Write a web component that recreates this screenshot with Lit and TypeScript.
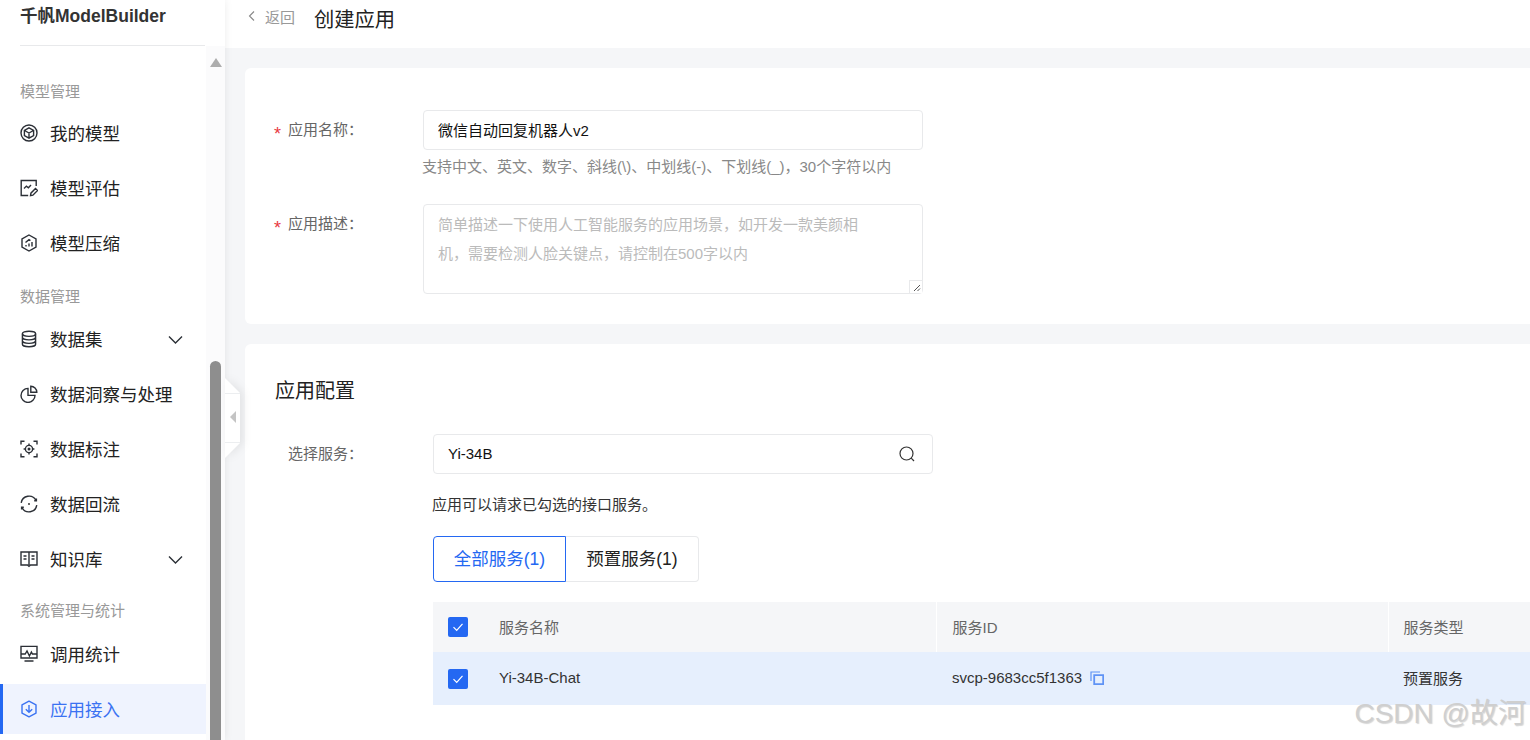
import { LitElement, html, css, svg } from "lit";
import { customElement } from "lit/decorators.js";

const icons: Record<string, any> = {
  cube: svg`<circle cx="9" cy="9" r="8"/><path d="M9 3.8l4.6 2.6v5.2L9 14.2l-4.6-2.6V6.4zM4.6 6.5L9 9l4.4-2.5M9 9v5"/>`,
  evaluate: svg`<path d="M16.2 7V1.5H1.2v15h7"/><path d="M4 9.5l2.4-2.4 2 1.6L11 6"/><path d="M10.5 16.6l.4-2.4 4.6-4.6 2 2-4.6 4.6z"/>`,
  compress: svg`<path d="M9 1l7 4v8l-7 4-7-4V5z"/><path d="M6 12.5v-1.5M9 12.5V9.5M12 12.5V8M5.5 8.5L9 5.6l1.4 1"/>`,
  database: svg`<ellipse cx="9" cy="3.8" rx="6.6" ry="2.6"/><path d="M2.4 3.8v10.4c0 1.4 3 2.6 6.6 2.6s6.6-1.2 6.6-2.6V3.8M2.4 7.3c0 1.4 3 2.6 6.6 2.6s6.6-1.2 6.6-2.6M2.4 10.8c0 1.4 3 2.6 6.6 2.6s6.6-1.2 6.6-2.6"/>`,
  pie: svg`<path d="M8 3.4a7 7 0 1 0 7 7H8z"/><path d="M10.8 1.2a6 6 0 0 1 6 6h-6z"/>`,
  label: svg`<path d="M1 4.5V1.2h3.5M13.5 1.2H17v3.3M17 13.5v3.3h-3.5M4.5 16.8H1v-3.3"/><circle cx="9" cy="9" r="3.6"/><circle cx="9" cy="9" r=".8" fill="currentColor"/><path d="M9 3.6v1.8M9 12.6v1.8M3.6 9h1.8M12.6 9h1.8"/>`,
  reflow: svg`<path d="M1.2 7.8A7.9 7.9 0 0 1 16 5.4M16.8 10.2A7.9 7.9 0 0 1 2 12.6"/><path d="M16.4 3.4v2.4h-2.2M1.6 14.6v-2.4h2.2"/><circle cx="9" cy="9" r=".9" fill="currentColor" stroke="none"/>`,
  book: svg`<path d="M1 2h16v13H10.5l-1.5 1.4L7.5 15H1zM9 2v13"/><path d="M3.5 6h3M3.5 9h3M11.5 6h3M11.5 9h3"/>`,
  monitor: svg`<path d="M1 1.4h16v11.6H1zM1 9h4.2l1.8-3 2.4 5 2-4 1 2H17M4.5 16h9"/>`,
  access: svg`<path d="M9 1.2l7 3.6v8.4l-7 3.6-7-3.6V4.8z" stroke-linejoin="round"/><path d="M9 5v7M5.8 9.2L9 12.3l3.2-3.1"/>`,
};

const menu: Array<{ group: string; short?: boolean; items: Array<{ icon: string; label: string; more?: boolean; active?: boolean }> }> = [
  {
    group: "模型管理",
    items: [
      { icon: "cube", label: "我的模型" },
      { icon: "evaluate", label: "模型评估" },
      { icon: "compress", label: "模型压缩" },
    ],
  },
  {
    group: "数据管理",
    items: [
      { icon: "database", label: "数据集", more: true },
      { icon: "pie", label: "数据洞察与处理" },
      { icon: "label", label: "数据标注" },
      { icon: "reflow", label: "数据回流" },
      { icon: "book", label: "知识库", more: true },
    ],
  },
  {
    group: "系统管理与统计",
    short: true,
    items: [
      { icon: "monitor", label: "调用统计" },
      { icon: "access", label: "应用接入", active: true },
    ],
  },
];

@customElement("app-root")
export class AppRoot extends LitElement {
  static styles = css`
    :host {
      display: flex;
      width: 1530px;
      height: 740px;
      overflow: hidden;
      position: relative;
      background: #f5f6f8;
      color: #222;
      font-family: "Liberation Sans", "Noto Sans CJK SC", sans-serif;
      font-size: 15px;
    }
    .sidebar {
      position: relative;
      z-index: 2;
      flex: none;
      width: 225px;
      display: flex;
      flex-direction: column;
      background: #fff;
      box-shadow: 0 0 8px rgba(0, 0, 0, 0.08);
    }
    .brand {
      flex: none;
      height: 45px;
      margin: 0 20px;
      width: 185px;
      border-bottom: 1px solid #e8e9eb;
      font-size: 17.5px;
      font-weight: 700;
      color: #333;
      line-height: 32px;
      white-space: nowrap;
    }
    .side-body {
      flex: 1;
      min-height: 0;
      display: flex;
    }
    nav {
      flex: none;
      width: 206px;
      padding-top: 21px;
      overflow: hidden;
    }
    .group {
      height: 41px;
      padding: 10px 0 0 20px;
      box-sizing: border-box;
      color: #999;
      line-height: 27px;
    }
    .group:first-child {
      padding-top: 11px;
    }
    .group.short {
      height: 40px;
      padding-top: 8px;
    }
    .item {
      height: 50px;
      margin-bottom: 5px;
      padding-left: 20px;
      display: flex;
      align-items: center;
      gap: 12px;
      font-size: 17.5px;
      color: #222;
      box-sizing: border-box;
    }
    .item span {
      margin-bottom: 2px;
    }
    .item.active {
      background: #eff3fe;
      color: #3a72f2;
      border-left: 3px solid #2468f2;
      padding-left: 17px;
    }
    .item svg {
      width: 18px;
      height: 18px;
      flex: none;
      fill: none;
      stroke: #2b2f36;
      stroke-width: 1.4;
    }
    .item.active svg {
      stroke: #3a72f2;
    }
    .item .chev {
      width: 15px;
      height: 15px;
      margin-left: auto;
      margin-right: 23px;
    }
    .track {
      flex: 1;
      background: #fbfbfc;
      display: flex;
      flex-direction: column;
      align-items: center;
      padding: 12px 0 0 0;
    }
    .track-up {
      width: 0;
      height: 0;
      border-left: 6.5px solid transparent;
      border-right: 6.5px solid transparent;
      border-bottom: 9px solid #adadad;
    }
    .thumb {
      width: 11px;
      flex: 1;
      margin-top: 294px;
      border-radius: 6px 6px 0 0;
      background: #8e8e8e;
    }
    .handle {
      position: absolute;
      left: 225px;
      top: 378px;
      width: 15px;
      height: 80px;
      filter: drop-shadow(3px 0 4px rgba(0, 0, 0, 0.08));
    }
    .handle-shape {
      width: 100%;
      height: 100%;
      background: linear-gradient(#fff 0 15px, #eceef0 15px 16px, #fff 16px 64px, #eceef0 64px 65px, #fff 65px);
      clip-path: polygon(0 0, 100% 15px, 100% 65px, 0 100%);
      display: flex;
      align-items: center;
      justify-content: center;
    }
    .handle-arrow {
      width: 0;
      height: 0;
      margin-top: -3px;
      border-top: 6px solid transparent;
      border-bottom: 6px solid transparent;
      border-right: 6px solid #c4c4c4;
    }
    main {
      flex: 1;
      min-width: 0;
      display: flex;
      flex-direction: column;
    }
    .topbar {
      flex: none;
      height: 48px;
      box-sizing: border-box;
      background: #fff;
      padding: 0 0 13px 23px;
      display: flex;
      align-items: center;
    }
    .back {
      display: flex;
      align-items: center;
      gap: 9px;
      color: #999;
      margin: 0 19px 3px 0;
    }
    .back svg {
      width: 8px;
      height: 10px;
      fill: none;
      stroke: #888;
      stroke-width: 1.1;
    }
    .page-title {
      font-size: 20.3px;
      color: #222;
    }
    .content {
      flex: 1;
      min-height: 0;
      padding: 20px 0 0 20px;
      display: flex;
      flex-direction: column;
      gap: 20px;
    }
    .card {
      background: #fff;
      border-radius: 6px 0 0 6px;
      padding: 0 0 0 30px;
    }
    .card.basic {
      flex: none;
      height: 256px;
      padding-top: 42px;
      box-sizing: border-box;
    }
    .card.config {
      flex: 1;
      min-height: 0;
      padding-top: 33px;
      border-radius: 6px 0 0 0;
    }
    .row {
      display: grid;
      grid-template-columns: 148px 500px;
    }
    .config .row {
      grid-template-columns: 158px 500px;
    }
    .row + .row {
      margin-top: 28px;
    }
    .label {
      color: #666;
      line-height: 40px;
      height: 40px;
      padding-left: 13px;
      position: relative;
    }
    .label.required::before {
      content: "*";
      position: absolute;
      left: -1px;
      top: 4px;
      font-size: 18px;
      color: #e8393f;
    }
    .field {
      width: 500px;
      height: 40px;
      box-sizing: border-box;
      border: 1px solid #e8e9eb;
      border-radius: 4px;
      padding: 0 14px;
      display: flex;
      align-items: center;
      justify-content: space-between;
      background: #fff;
    }
    input,
    textarea {
      border: 0;
      outline: 0;
      padding: 0;
      margin: 0;
      width: 100%;
      background: none;
      font: inherit;
      color: #111;
    }
    input {
      position: relative;
      top: -1px;
    }
    .hint {
      margin-top: 8px;
      color: #888;
      line-height: 18px;
      margin-left: -1px;
      white-space: nowrap;
    }
    .area {
      position: relative;
      height: 90px;
      padding: 5px 14px;
      align-items: flex-start;
    }
    textarea {
      height: 76px;
      resize: none;
      padding-right: 44px;
      line-height: 29px;
      box-sizing: border-box;
      overflow: hidden;
    }
    textarea::placeholder {
      color: #bbb;
      opacity: 1;
    }
    .grip {
      position: absolute;
      right: 0;
      bottom: 0;
      width: 13px;
      height: 13px;
      box-sizing: border-box;
      border: 1px solid #e8e9eb;
      border-width: 1px 0 0 1px;
      background: #fff;
    }
    .grip svg {
      display: block;
      width: 12px;
      height: 12px;
      stroke: #555;
      stroke-width: 1;
      fill: none;
    }
    .section-title {
      font-size: 20px;
      line-height: 28px;
      color: #222;
      margin-bottom: 29px;
    }
    .search svg {
      width: 18px;
      height: 18px;
      fill: none;
      stroke: #333;
      stroke-width: 1.2;
      margin-right: 2px;
      flex: none;
    }
    .service {
      margin-left: 158px;
    }
    .note {
      margin-top: 21px;
      line-height: 20px;
      margin-left: -1px;
      color: #333;
    }
    .tabs {
      display: flex;
      margin-top: 21px;
    }
    .tab {
      width: 133px;
      height: 46px;
      box-sizing: border-box;
      padding-bottom: 4px;
      display: flex;
      align-items: center;
      justify-content: center;
      font-size: 17.5px;
      border: 1px solid #e8e9eb;
      border-left: 0;
      border-radius: 0 4px 4px 0;
      color: #222;
    }
    .tab.on {
      color: #2468f2;
      border: 1px solid #2468f2;
      border-radius: 4px 0 0 4px;
    }
    table {
      margin-top: 20px;
      width: 1097px;
      border-collapse: collapse;
      table-layout: fixed;
    }
    th,
    td {
      padding: 0 0 2px 15px;
      box-sizing: border-box;
      text-align: left;
      font-weight: 400;
      white-space: nowrap;
    }
    th {
      height: 50px;
      background: #f5f6f8;
      color: #666;
    }
    th:nth-child(n + 3) {
      border-left: 1px solid #fff;
    }
    td {
      height: 53px;
      background: #e6effd;
      color: #333;
    }
    th:nth-child(3),
    td:nth-child(3) {
      padding-left: 16px;
    }
    .col-check {
      width: 51px;
    }
    .col-name {
      width: 452px;
    }
    .col-id {
      width: 452px;
    }
    .check {
      width: 20px;
      height: 20px;
      margin-bottom: -2px;
      border-radius: 2px;
      background: #2468f2;
      display: block;
    }
    .check svg {
      display: block;
      width: 20px;
      height: 20px;
      fill: none;
      stroke: #fff;
      stroke-width: 1.2;
    }
    .id {
      display: flex;
      align-items: center;
      gap: 8px;
    }
    .id svg {
      width: 14px;
      height: 14px;
      fill: none;
      stroke: #5f93f5;
      stroke-width: 1.8;
      flex: none;
    }
    .watermark {
      position: absolute;
      right: 4px;
      bottom: 9px;
      font-size: 28px;
      line-height: 34px;
      color: #cfcfcf;
      text-shadow: 1px 1px 1px rgba(0, 0, 0, 0.16);
      white-space: nowrap;
      z-index: 3;
    }
  `;

  renderCheck() {
    return html`<span class="check"><svg viewBox="0 0 20 20"><path d="M5.5 10.2l3.2 3.2 5.8-6.6" /></svg></span>`;
  }

  renderNav() {
    return html`<nav>
      ${menu.map(
        (section) => html`
          <div class="group ${section.short ? "short" : ""}">${section.group}</div>
          ${section.items.map(
            (item) => html`<div class="item ${item.active ? "active" : ""}">
              <svg viewBox="0 0 18 18">${icons[item.icon]}</svg>
              <span>${item.label}</span>
              ${item.more
                ? html`<svg class="chev" viewBox="0 0 15 15"><path d="M1 4.5l6.5 6.5L14 4.5" /></svg>`
                : ""}
            </div>`
          )}
        `
      )}
    </nav>`;
  }

  render() {
    return html`
      <aside class="sidebar">
        <div class="brand">千帆ModelBuilder</div>
        <div class="side-body">
          ${this.renderNav()}
          <div class="track">
            <div class="track-up"></div>
            <div class="thumb"></div>
          </div>
        </div>
        <div class="handle">
          <div class="handle-shape"><div class="handle-arrow"></div></div>
        </div>
      </aside>
      <main>
        <div class="topbar">
          <div class="back">
            <svg viewBox="0 0 8 10"><path d="M6 .5L1.5 5 6 9.5" /></svg>
            <span>返回</span>
          </div>
          <div class="page-title">创建应用</div>
        </div>
        <div class="content">
          <section class="card basic">
            <div class="row">
              <div class="label required">应用名称：</div>
              <div>
                <div class="field"><input .value=${"微信自动回复机器人v2"} /></div>
                <div class="hint">支持中文、英文、数字、斜线(\\)、中划线(-)、下划线(_)，30个字符以内</div>
              </div>
            </div>
            <div class="row">
              <div class="label required">应用描述：</div>
              <div class="field area">
                <textarea placeholder="简单描述一下使用人工智能服务的应用场景，如开发一款美颜相机，需要检测人脸关键点，请控制在500字以内"></textarea>
                <div class="grip">
                  <svg viewBox="0 0 12 12"><path d="M4 10l6-6M7.5 10L10 7.5" /></svg>
                </div>
              </div>
            </div>
          </section>
          <section class="card config">
            <div class="section-title">应用配置</div>
            <div class="row">
              <div class="label">选择服务：</div>
              <div class="field search">
                <input .value=${"Yi-34B"} />
                <svg viewBox="0 0 18 18"><circle cx="8.5" cy="8.5" r="6.5" /><path d="M13.2 13.2L16 16" /></svg>
              </div>
            </div>
            <div class="service">
              <div class="note">应用可以请求已勾选的接口服务。</div>
              <div class="tabs">
                <div class="tab on">全部服务(1)</div>
                <div class="tab">预置服务(1)</div>
              </div>
              <table>
                <colgroup>
                  <col class="col-check" />
                  <col class="col-name" />
                  <col class="col-id" />
                  <col />
                </colgroup>
                <thead>
                  <tr>
                    <th>${this.renderCheck()}</th>
                    <th>服务名称</th>
                    <th>服务ID</th>
                    <th>服务类型</th>
                  </tr>
                </thead>
                <tbody>
                  <tr>
                    <td>${this.renderCheck()}</td>
                    <td>Yi-34B-Chat</td>
                    <td>
                      <div class="id">
                        <span>svcp-9683cc5f1363</span>
                        <svg viewBox="0 0 14 14"><path d="M4.2 4.2h9v9h-9z" /><path d="M1 10V1h9" stroke-width="1.2" /></svg>
                      </div>
                    </td>
                    <td>预置服务</td>
                  </tr>
                </tbody>
              </table>
            </div>
          </section>
        </div>
      </main>
      <div class="watermark">CSDN @故河</div>
    `;
  }
}

declare global {
  interface HTMLElementTagNameMap {
    "app-root": AppRoot;
  }
}
